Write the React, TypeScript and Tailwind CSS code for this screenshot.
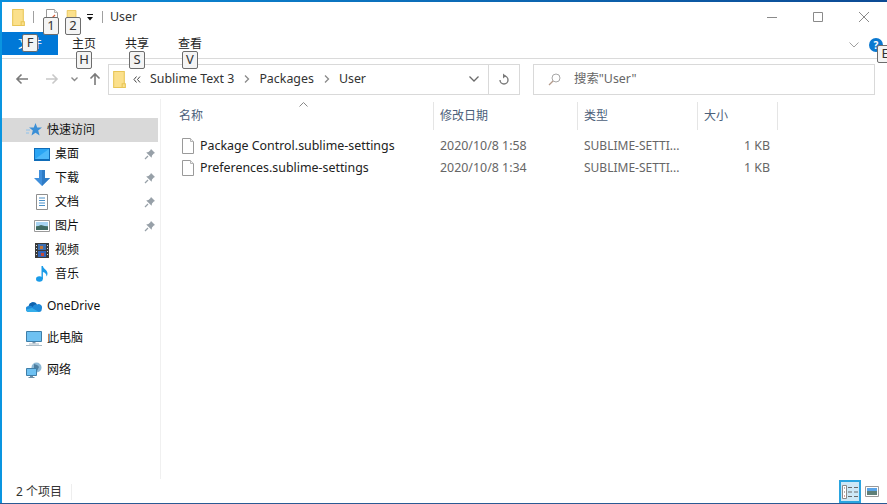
import type { ReactNode } from "react";

const font = "font-['Noto_Sans','Noto_Sans_CJK_SC',sans-serif]";

function FolderIcon({ size = 16 }: { size?: number }) {
  return (
    <svg width={size} height={size} viewBox="0 0 16 16" className="shrink-0">
      <path d="M2.5 .5h10v15h-10z" fill="#fbe08c" stroke="#e8c556" />
      <path d="M10.500 12h3v3.500h-3z" fill="#fbe08c" stroke="#e8c556" />
    </svg>
  );
}

function FileIcon({ mark }: { mark?: boolean }) {
  return (
    <svg width="16" height="16" viewBox="0 0 16 16" className="shrink-0">
      <path d="M2.5 .5h8l3 3v12h-11z" fill="#fff" stroke="#9a9a9a" />
      <path d="M10.5 .5v3h3" fill="#f0f0f0" stroke="#b5b5b5" />
      {mark && <path d="M8 9l3-3" stroke="#d8603a" strokeWidth="1.200" />}
    </svg>
  );
}

function Pin() {
  return (
    <svg width="12" height="12" viewBox="0 0 12 12" className="shrink-0">
      <path d="M7 1l4 4-1.2.6L8 7.5 7.6 9.8 2.2 4.4 4.5 4l1.900-1.800z" fill="#97a0a8" />
      <path d="M4 8L1 11" stroke="#97a0a8" strokeWidth="1.200" />
    </svg>
  );
}

function Keytip({ label, className }: { label: string; className: string }) {
  return (
    <div
      className={`absolute z-10 flex h-[18px] w-4 items-center justify-center rounded-[2px] border border-[#6d6d6d] bg-[#f4f4f4] text-[13px] text-[#333] ${className}`}
    >
      {label}
    </div>
  );
}

const iconQuick = (
  <svg width="16" height="16" viewBox="0 0 16 16">
    <path d="M9.5 1l1.700 4.400 4.800.2-3.800 3 1.400 4.800-4.100-2.700-4 2.700 1.300-4.800-3.700-3 4.700-.2z" fill="#3b8fd6" />
    <path d="M0 8h4M0 11h3" stroke="#8ec2ec" />
  </svg>
);

const iconDesktop = (
  <svg width="16" height="13" viewBox="0 0 16 13">
    <path d="M0 0h16v13H0z" fill="#0f6cb8" />
    <path d="M1 1h14v10H1z" fill="#2aa5f4" />
    <path d="M1 11L15 1v10z" fill="#4db9fa" />
  </svg>
);

const iconDownload = (
  <svg width="16" height="16" viewBox="0 0 16 16">
    <path d="M5 0h6v8h5l-8 8-8-8h5z" fill="#3f8fdc" />
    <path d="M8 0h3v8h5l-8 8z" fill="#2f7cc6" />
  </svg>
);

const iconDoc = (
  <svg width="12" height="16" viewBox="0 0 12 16">
    <path d="M.5.5h11v15H.5z" fill="#fff" stroke="#8f8f8f" />
    <path d="M3 4h6M3 6.500h6M3 9h6M3 11.500h6" stroke="#4a90c8" />
  </svg>
);

const iconPicture = (
  <svg width="16" height="12" viewBox="0 0 16 12">
    <path d="M.5.5h15v11H.5z" fill="#fff" stroke="#9a9a9a" />
    <path d="M2 2h12v4H2z" fill="#a8d4f2" />
    <path d="M2 6h12v4H2z" fill="#5f8f80" />
    <path d="M2 7l5-2 7 2v3H2z" fill="#3f6a62" />
  </svg>
);

const iconVideo = (
  <svg width="14" height="15" viewBox="0 0 14 15">
    <path d="M0 0h14v15H0z" fill="#3a3a3a" />
    <path d="M3 1h8v6H3z" fill="#3d6fb0" />
    <path d="M3 8h8v6H3z" fill="#2f64b8" />
    <path d="M5 3h3v3H5z" fill="#c0763a" />
    <path d="M6 10h3v3H6z" fill="#c24a3a" />
    <path d="M1 2h1v1H1zM1 5h1v1H1zM1 8h1v1H1zM1 11h1v1H1zM12 2h1v1h-1zM12 5h1v1h-1zM12 8h1v1h-1zM12 11h1v1h-1z" fill="#ddd" />
  </svg>
);

const iconMusic = (
  <svg width="12" height="16" viewBox="0 0 12 16">
    <ellipse cx="3.400" cy="13" rx="3.400" ry="2.800" fill="#1a9be8" />
    <path d="M5.500 0h1.400c.4 3 4.600 3.600 4.600 7.600 0 1.200-.4 2.200-1 3 .2-2.600-1.600-4-3.600-4.600V13H5.500z" fill="#1a9be8" />
  </svg>
);

const iconCloud = (
  <svg width="16" height="11" viewBox="0 0 16 11">
    <path d="M3 11a3 3 0 0 1-.4-6A4.600 4.600 0 0 1 11 3.400 3.600 3.600 0 0 1 15.800 8 3 3 0 0 1 13 11z" fill="#1f8ad8" />
    <path d="M2.600 5A4.600 4.600 0 0 1 11 3.400 4 4 0 0 0 6.600 6 3.400 3.400 0 0 0 2.600 5z" fill="#0f62ad" />
    <path d="M3 11c-2 0-3-1.400-3-2.600L6 7l7 4z" fill="#35aeea" />
  </svg>
);

const iconPc = (
  <svg width="16" height="15" viewBox="0 0 16 15">
    <path d="M.5.5h15v10H.5z" fill="#6ec1f2" stroke="#3f7ea8" />
    <path d="M6.500 11h3v1.500h-3z" fill="#7b97ab" />
    <path d="M3 12.500h10v1H3zM0 14h16v1H0z" fill="#a9bac6" />
  </svg>
);

const iconNet = (
  <svg width="16" height="16" viewBox="0 0 16 16">
    <circle cx="10.500" cy="5.500" r="5" fill="#8db9d6" />
    <path d="M8 2c2 .5 4 1 5 3l-2 4-3-2z" fill="#4f7fa0" />
    <path d="M.5 6.500h10v7h-10z" fill="#6ec1f2" stroke="#3f7ea8" />
    <path d="M4 14h3v1H4zM2.500 15h6v1h-6z" fill="#6f8fa6" />
  </svg>
);

function NavRow({ icon, label, pin }: { icon: ReactNode; label: string; pin?: boolean }) {
  return (
    <div className="flex h-6 w-[156px] items-center pl-[32px] pr-[2px] text-[12px]">
      <div className="flex w-4 shrink-0 justify-center">{icon}</div>
      <span className="ml-[5px] flex-1 text-[#111]">{label}</span>
      {pin && <Pin />}
    </div>
  );
}

function TopNavRow({ icon, label, active }: { icon: ReactNode; label: string; active?: boolean }) {
  return (
    <div className={`flex h-6 w-[156px] items-center pl-[24px] text-[12px] ${active ? "bg-[#d9d9d9]" : ""}`}>
      <div className="flex w-4 shrink-0 justify-center">{icon}</div>
      <span className="ml-[5px] text-[#111]">{label}</span>
    </div>
  );
}

const files = [
  { name: "Package Control.sublime-settings", date: "2020/10/8 1:58" },
  { name: "Preferences.sublime-settings", date: "2020/10/8 1:34" },
];

export default function App() {
  return (
    <div className={`${font} relative flex h-[504px] w-[887px] flex-col overflow-hidden bg-white text-[12px] text-[#222]`}>
      <div className="h-0.5 shrink-0 bg-gradient-to-r from-[#0a8fdc] to-[#0c4a94]" />
      <div className="flex min-h-0 flex-1">
        <div className="w-0.5 shrink-0 bg-[#0a95e0]" />
        <div className="flex min-w-0 flex-1 flex-col">
          {/* title bar */}
          <div className="flex h-[30px] shrink-0 items-center pl-[8px]">
            <FolderIcon size={17} />
            <div className="ml-[6px] h-3 w-px bg-[#a0a0a0]" />
            <div className="ml-[10px]"><FileIcon mark /></div>
            <div className="ml-[5px]"><FolderIcon size={14} /></div>
            <svg width="9" height="9" viewBox="0 0 9 9" className="ml-[7px]">
              <path d="M1 1h6v1H1zM1 4h6L4 7.500z" fill="#111" />
            </svg>
            <div className="ml-[7px] h-3 w-px bg-[#a0a0a0]" />
            <span className="ml-[7px] text-[12.400px] text-[#333]">User</span>
            <div className="ml-auto flex h-full items-center">
              <svg width="46" height="30" viewBox="0 0 46 30"><path d="M18 15.500h10" stroke="#8a8a8a" /></svg>
              <svg width="46" height="30" viewBox="0 0 46 30"><path d="M18.500 10.500h9v9h-9z" fill="none" stroke="#8a8a8a" /></svg>
              <svg width="46" height="30" viewBox="0 0 46 30"><path d="M18 10l10 10M28 10L18 20" stroke="#8a8a8a" /></svg>
            </div>
          </div>

          {/* ribbon tabs */}
          <div className="flex h-[27px] shrink-0 items-center border-b border-[#dadada]">
            <div className="flex h-[23px] w-[56px] items-center justify-center self-start bg-[#0078d7] text-[12px] text-white">文件</div>
            <div className="ml-[12px] w-[28px] pb-[2px] text-center">主页</div>
            <div className="ml-[25px] w-[28px] pb-[2px] text-center">共享</div>
            <div className="ml-[25px] w-[28px] pb-[2px] text-center">查看</div>
            <svg width="10" height="6" viewBox="0 0 10 6" className="ml-auto mr-[28px]">
              <path d="M.5.500L5 5 9.500.5" fill="none" stroke="#a0a0a0" />
            </svg>
          </div>

          {/* address row */}
          <div className="flex h-[40px] shrink-0 items-center">
            <svg width="14" height="12" viewBox="0 0 14 12" className="ml-[13px]">
              <path d="M13 6H2M6.500 1.500L2 6l4.500 4.500" fill="none" stroke="#7a7a7a" strokeWidth="1.600" />
            </svg>
            <svg width="14" height="12" viewBox="0 0 14 12" className="ml-[16px]">
              <path d="M1 6h11M7.500 1.500L12 6l-4.500 4.500" fill="none" stroke="#c8c8c8" strokeWidth="1.600" />
            </svg>
            <svg width="7" height="5" viewBox="0 0 7 5" className="ml-[12px]">
              <path d="M.5.500L3.500 3.500 6.500.5" fill="none" stroke="#8a8a8a" strokeWidth="1.400" />
            </svg>
            <svg width="12" height="14" viewBox="0 0 12 14" className="ml-[11px]">
              <path d="M6 13V2M1.500 6.500L6 2l4.500 4.500" fill="none" stroke="#7a7a7a" strokeWidth="1.600" />
            </svg>
            <div className="ml-[7px] flex h-[31px] w-[412px] items-center border border-[#d9d9d9] pl-[2px]">
              <FolderIcon size={17} />
              <svg width="8" height="7" viewBox="0 0 8 7" className="ml-[5px]">
                <path d="M3.500.5L1 3.500l2.500 3M7 .5L4.500 3.500 7 6.500" fill="none" stroke="#444" />
              </svg>
              <span className="ml-[9px] text-[12.400px] text-[#333]">Sublime Text 3</span>
              <svg width="6" height="8" viewBox="0 0 6 8" className="ml-[10px]">
                <path d="M1 .5L4.500 4 1 7.500" fill="none" stroke="#8a8a8a" strokeWidth="1.300" />
              </svg>
              <span className="ml-[9px] text-[12.400px] text-[#333]">Packages</span>
              <svg width="6" height="8" viewBox="0 0 6 8" className="ml-[10px]">
                <path d="M1 .5L4.500 4 1 7.500" fill="none" stroke="#8a8a8a" strokeWidth="1.300" />
              </svg>
              <span className="ml-[9px] text-[12.400px] text-[#333]">User</span>
              <svg width="10" height="6" viewBox="0 0 10 6" className="ml-auto mr-[9px]">
                <path d="M.5.500L5 5 9.500.5" fill="none" stroke="#6a6a6a" strokeWidth="1.300" />
              </svg>
              <div className="flex h-full w-[31px] items-center justify-center border-l border-[#d9d9d9]">
                <svg width="12" height="13" viewBox="0 0 12 13">
                  <path d="M6 3A4 4 0 1 1 2 7" fill="none" stroke="#7a7a7a" strokeWidth="1.400" />
                  <path d="M5 .5L8 3 5 5.500z" fill="#7a7a7a" />
                </svg>
              </div>
            </div>
            <div className="ml-[13px] flex h-[31px] w-[342px] items-center border border-[#d9d9d9] pl-[14px]">
              <svg width="13" height="13" viewBox="0 0 13 13">
                <circle cx="8" cy="5" r="4" fill="none" stroke="#a8a8a8" />
                <path d="M5 8l-4 4" stroke="#b49a8a" strokeWidth="1.200" />
              </svg>
              <span className="ml-[13px] text-[12.400px] text-[#666]">搜索"User"</span>
            </div>
          </div>

          {/* body */}
          <div className="flex min-h-0 flex-1">
            <aside className="flex w-[159px] shrink-0 flex-col border-r border-[#f0f0f0] pt-[19px]">
              <TopNavRow icon={iconQuick} label="快速访问" active />
              <NavRow icon={iconDesktop} label="桌面" pin />
              <NavRow icon={iconDownload} label="下载" pin />
              <NavRow icon={iconDoc} label="文档" pin />
              <NavRow icon={iconPicture} label="图片" pin />
              <NavRow icon={iconVideo} label="视频" />
              <NavRow icon={iconMusic} label="音乐" />
              <div className="mt-2"><TopNavRow icon={iconCloud} label="OneDrive" /></div>
              <div className="mt-2"><TopNavRow icon={iconPc} label="此电脑" /></div>
              <div className="mt-2"><TopNavRow icon={iconNet} label="网络" /></div>
            </aside>

            <main className="relative min-w-0 flex-1 pl-[12px]">
              <svg width="9" height="5" viewBox="0 0 9 5" className="absolute left-[138px] top-[3px]">
                <path d="M.5 4.500L4.500.5l4 4" fill="none" stroke="#888" />
              </svg>
              <div className="mt-[3px] flex h-[28px] text-[#4c607a]">
                <div className="flex w-[261px] items-center border-r border-[#e5e5e5] pl-[6px]">名称</div>
                <div className="flex w-[144px] items-center border-r border-[#e5e5e5] pl-[6px]">修改日期</div>
                <div className="flex w-[120px] items-center border-r border-[#e5e5e5] pl-[6px]">类型</div>
                <div className="flex w-[80px] items-center border-r border-[#e5e5e5] pl-[6px]">大小</div>
              </div>
              <div className="mt-[5px]">
                {files.map((f) => (
                  <div key={f.name} className="flex h-[22px] items-center">
                    <div className="flex w-[261px] items-center pl-[7px] text-[12.400px] text-[#222]">
                      <FileIcon />
                      <span className="ml-[4px]">{f.name}</span>
                    </div>
                    <div className="w-[144px] pl-[6px] text-[12.400px] text-[#666]">{f.date}</div>
                    <div className="w-[120px] truncate pl-[6px] text-[#666]">SUBLIME-SETTI...</div>
                    <div className="w-[80px] pr-[8px] text-right text-[12.400px] text-[#666]">1 KB</div>
                  </div>
                ))}
              </div>
            </main>
          </div>

          {/* status bar */}
          <div className="flex h-[24px] shrink-0 items-center pl-[14px] pt-[2px]">
            <span className="text-[12px] text-[#333]">2 个项目</span>
            <div className="ml-[9px] h-4 w-px bg-[#eeeeee]" />
            <div className="ml-auto mr-[8px] flex items-center self-end">
              <div className="flex h-[23px] w-[22px] items-center justify-center border-2 border-[#2aa5e0] bg-[#cde8f6]">
                <svg width="16" height="14" viewBox="0 0 16 14">
                  <path d="M.5.5h4v13h-4z" fill="#fff" stroke="#8a8a8a" />
                  <path d="M2 2.500h1v1H2zM2 6.500h1v1H2z" fill="#666" />
                  <path d="M2 10.500h1v1H2z" fill="#b04040" />
                  <path d="M6 2.500h4M12 2.500h4M6 7h4M12 7h4M6 11.500h4M12 11.500h4" stroke="#6a6a6a" />
                </svg>
              </div>
              <div className="ml-[4px] flex">
                <svg width="14" height="11" viewBox="0 0 14 11">
                  <path d="M.5.5h13v10H.5z" fill="#fff" stroke="#9a9a9a" />
                  <path d="M2 2h10v3H2z" fill="#5aa4e8" />
                  <path d="M2 5h10v4H2z" fill="#5f7f78" />
                </svg>
              </div>
            </div>
          </div>
        </div>
      </div>
      <div className="h-px shrink-0 bg-[#2a5a94]" />

      {/* help button sits under the E keytip */}
      <div className="absolute left-[869px] top-[38px] flex h-[14px] w-[14px] items-center justify-center rounded-full bg-[#0a78d0] text-[10px] font-bold text-white">?</div>

      <Keytip label="1" className="left-[43px] top-[17px]" />
      <Keytip label="2" className="left-[65px] top-[17px]" />
      <Keytip label="F" className="left-[22px] top-[34px]" />
      <Keytip label="H" className="left-[76px] top-[51px]" />
      <Keytip label="S" className="left-[129px] top-[51px]" />
      <Keytip label="V" className="left-[182px] top-[51px]" />
      <Keytip label="E" className="left-[877px] top-[45px]" />
    </div>
  );
}
